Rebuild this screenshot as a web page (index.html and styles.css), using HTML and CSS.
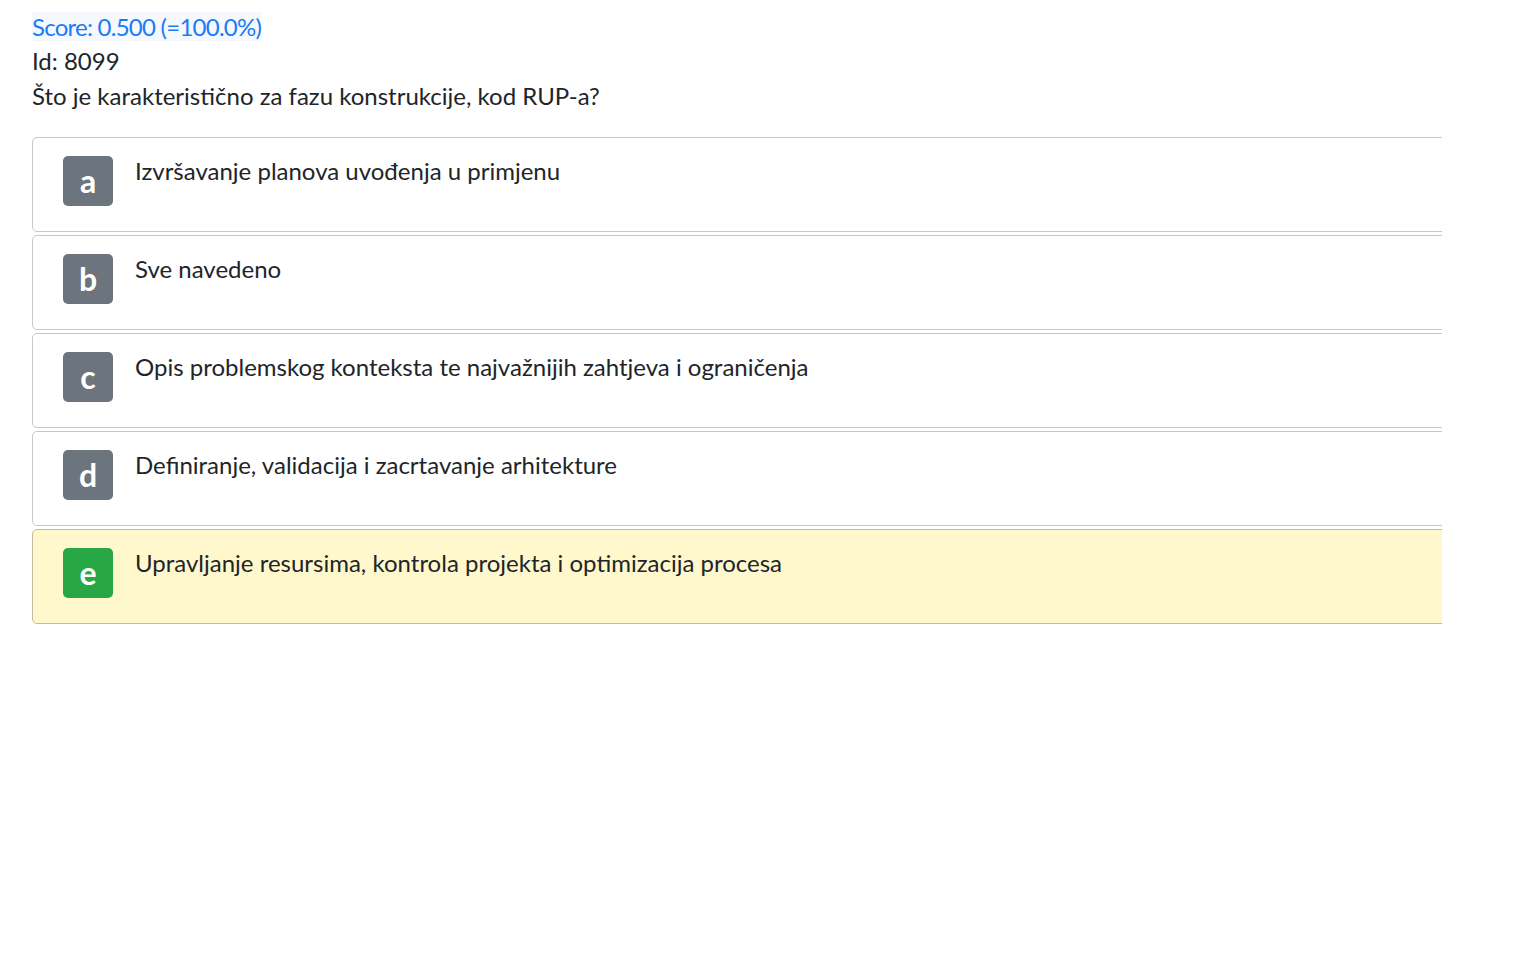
FILE: index.html
```html
<!DOCTYPE html>
<html lang="hr">
<head>
<meta charset="utf-8">
<title>Pitanje 8099</title>
<link rel="stylesheet" href="styles.css">
</head>
<body>
<div class="page">
  <div class="line"><span class="score">Score: 0.500 (=100.0%)</span></div>
  <div class="line">Id: 8099</div>
  <div class="line">Što je karakteristično za fazu konstrukcije, kod RUP-a?</div>
  <div class="answers">
    <div class="answer"><div class="badge">a</div><div class="text">Izvršavanje planova uvođenja u primjenu</div></div>
    <div class="answer"><div class="badge">b</div><div class="text">Sve navedeno</div></div>
    <div class="answer"><div class="badge">c</div><div class="text">Opis problemskog konteksta te najvažnijih zahtjeva i ograničenja</div></div>
    <div class="answer"><div class="badge">d</div><div class="text">Definiranje, validacija i zacrtavanje arhitekture</div></div>
    <div class="answer correct"><div class="badge">e</div><div class="text">Upravljanje resursima, kontrola projekta i optimizacija procesa</div></div>
  </div>
</div>
</body>
</html>
```
FILE: styles.css
```css
html, body {
  margin: 0;
  padding: 0;
  background: #ffffff;
}
body {
  font-family: "Lato", "Liberation Sans", sans-serif;
  font-size: 24px;
  line-height: 34.5px;
  color: #212529;
}
.page {
  padding: 9.5px 0 0 32px;
  width: 1410px;
  overflow: hidden;
}
.score {
  color: #1a7cf5;
  background: #f5f8fc;
  letter-spacing: -0.75px;
}
.answers {
  margin-top: 23.5px;
  display: flex;
  flex-direction: column;
  gap: 3px;
}
.answer {
  width: 1460px;
  box-sizing: border-box;
  height: 95px;
  border: 1px solid #c8c8c8;
  border-radius: 5px;
  background: #ffffff;
  display: flex;
  align-items: flex-start;
  padding: 18px 30px 0 30px;
  gap: 22px;
}
.answer.correct {
  background: #fff8cc;
  border-color: #c2bd9c;
}
.badge {
  flex: 0 0 50px;
  width: 50px;
  height: 50px;
  border-radius: 5px;
  background: #6c757d;
  color: #ffffff;
  font-weight: 700;
  font-size: 32px;
  line-height: 50px;
  text-align: center;
}
.correct .badge {
  background: #28a745;
}
.text {
  margin-top: -2px;
}
```
